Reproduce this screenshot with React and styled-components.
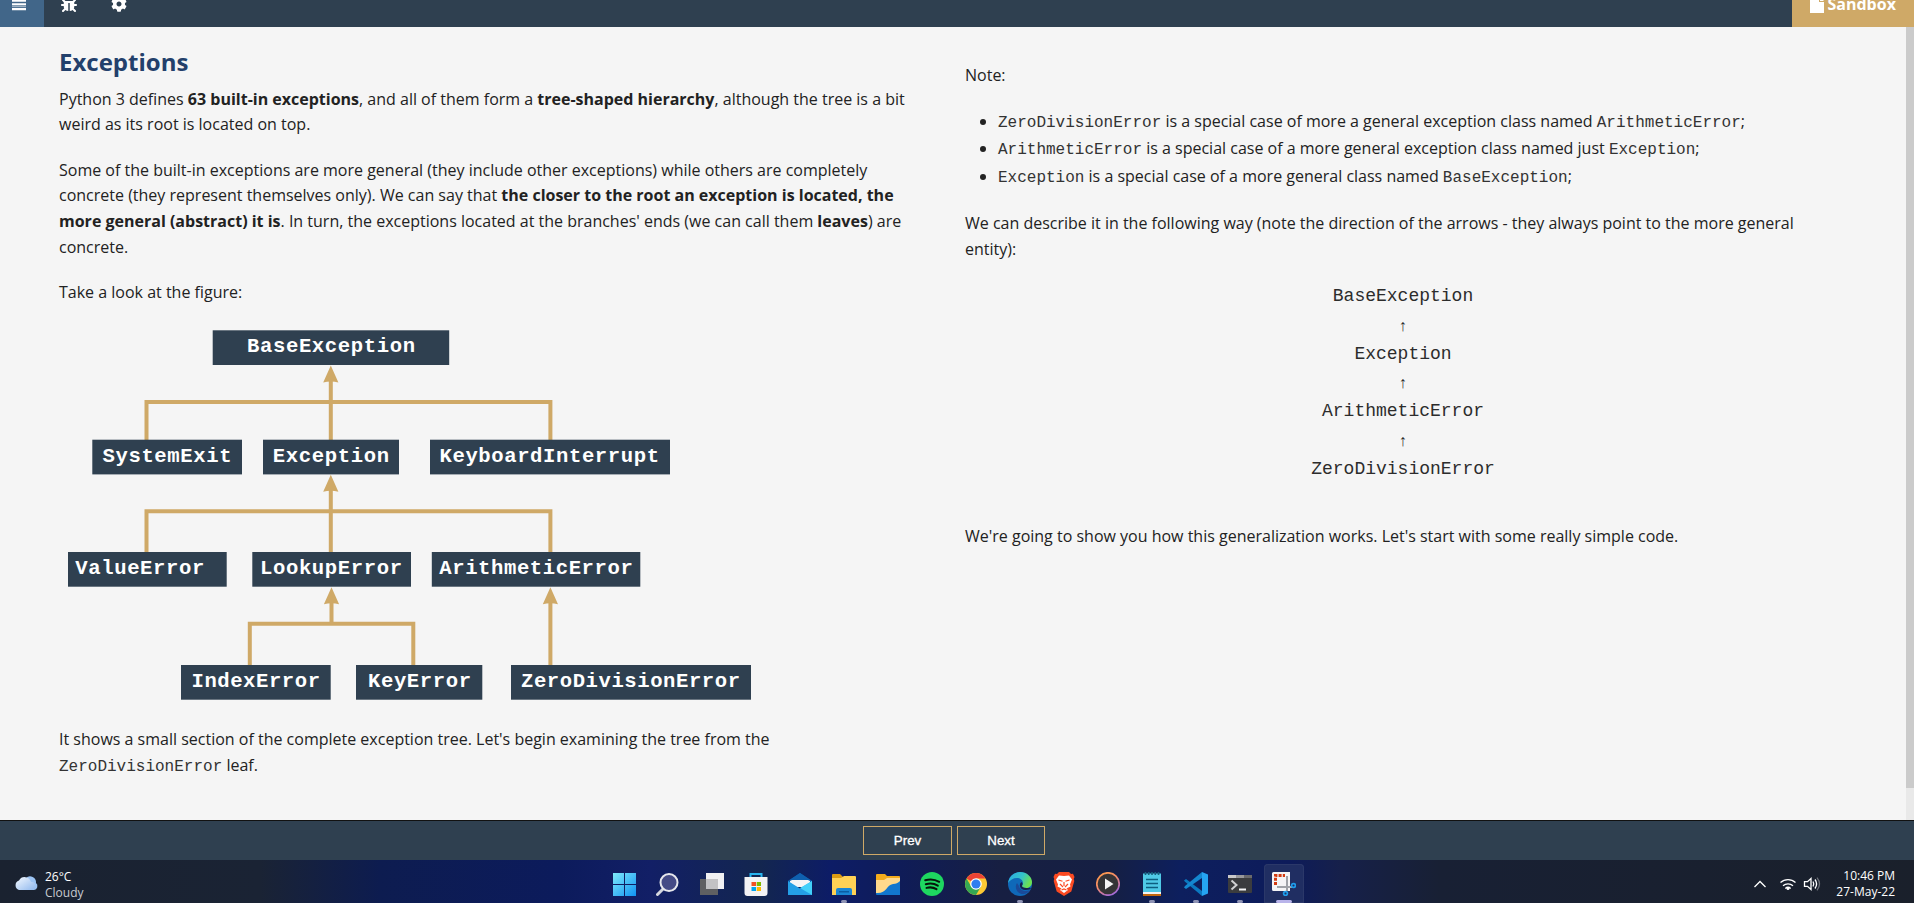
import React from "react";
import styled, { createGlobalStyle } from "styled-components";
import { FaBug, FaCog } from "react-icons/fa";

const GlobalStyle = createGlobalStyle`
  * { box-sizing: border-box; }
  body { margin: 0; overflow: hidden; background: #f5f5f5; }
`;

const Page = styled.div`
  display: flex;
  flex-direction: column;
  width: 100vw;
  height: 903px;
  font: 16px/25.6px "Open Sans", sans-serif;
  color: #222;
`;

const TopBar = styled.header`
  display: flex;
  justify-content: space-between;
  height: 27px;
  flex: none;
  overflow: hidden;
  background: #2f4050;
  color: #fff;
`;

const Tools = styled.nav`
  display: flex;
`;

const ToolButton = styled.div`
  display: flex;
  justify-content: center;
  width: ${(p) => p.$width}px;
  margin-top: -4px;
  background: ${(p) => (p.$active ? "#416689" : "transparent")};
  svg { display: block; }
`;

const SandboxTab = styled.div`
  display: flex;
  gap: 4px;
  width: 122px;
  padding-left: 17.5px;
  background: #cfa967;
  font-weight: 700;
  svg { margin-top: -4px; }
`;

const SandboxLabel = styled.span`
  margin-top: -8px;
`;

const Body = styled.div`
  display: flex;
  flex: 1;
  min-height: 0;
`;

const Columns = styled.main`
  display: grid;
  grid-template-columns: 876px 876px;
  column-gap: 30px;
  align-content: start;
  flex: 1;
  padding-left: 59px;
`;

const Column = styled.section`
  padding-top: ${(p) => p.$top}px;
`;

const Title = styled.h1`
  margin: 0 0 7.6px;
  font-size: 24px;
  line-height: 34px;
  font-weight: 700;
  color: #23406b;
`;

const Paragraph = styled.p`
  margin: 0 0 20px;
`;

const Code = styled.code`
  font: 16px/1 "Liberation Mono", monospace;
  color: #333;
`;

const Figure = styled.svg`
  display: block;
  margin: -26.2px 0 17.4px;
`;

const Notes = styled.ul`
  margin: -1px 0 21px;
  padding-left: 33px;
  line-height: 27.5px;
`;

const Chain = styled.div`
  margin: 3px 0 40.6px;
  font: 18px/28.7px "Liberation Mono", monospace;
  text-align: center;
  color: #2c2c2c;
`;

const ChainArrow = styled.div`
  padding-top: 4px;
  font-size: 16px;
  line-height: 24.7px;
`;

const ScrollTrack = styled.div`
  width: 8px;
  background: #e9e9e9;
`;

const ScrollThumb = styled.div`
  height: 761px;
  background: #cbcbcb;
`;

const Pager = styled.footer`
  display: flex;
  justify-content: center;
  align-items: flex-start;
  gap: 5px;
  height: 40px;
  flex: none;
  padding: 5px 6px 0 0;
  border-top: 1px solid #111;
  background: #2f4050;
`;

const PagerButton = styled.button`
  width: ${(p) => p.$width}px;
  height: 29px;
  padding: 0;
  border: 1px solid #cfa967;
  background: transparent;
  color: #fff;
  font: 13.33px "Liberation Sans", Arial, sans-serif;
  -webkit-text-stroke: 0.3px #fff;
`;

const Taskbar = styled.div`
  display: grid;
  grid-template-columns: 602px 704px 1fr;
  height: 43px;
  flex: none;
  color: #fff;
  background: linear-gradient(90deg, #1a2230 0, #1a2334 260px, #0d1c50 380px, #0c1b5c 560px, #121f66 650px, #13264f 760px, #0d1c66 830px, #0f1c58 900px, #171f42 1000px, #151f43 1110px, #0d1f5e 1180px, #0d1b5a 1290px, #16204a 1340px, #182034 1440px, #1a202b 1914px);
`;

const Weather = styled.div`
  display: flex;
  gap: 7px;
  padding: 9px 0 0 14px;
  font: 12px/16px "Open Sans", sans-serif;
`;

const WeatherText = styled.div`
  span { display: block; }
  span + span { color: #c9ccd2; }
`;

const Apps = styled.div`
  display: flex;
`;

const AppSlot = styled.div`
  display: flex;
  flex-direction: column;
  align-items: center;
  width: 40px;
  margin: 4px 2px 0;
  padding-top: 8px;
  border-radius: 4px 4px 0 0;
  box-shadow: ${(p) => (p.$active ? "inset 0 0 0 1px #2b3869" : "none")};
  background: ${(p) => (p.$active ? "#202e62" : "transparent")};
`;

const Indicator = styled.i`
  width: ${(p) => (p.$active ? 16 : 6)}px;
  height: 3px;
  margin-top: 4px;
  border-radius: 2px;
  background: ${(p) => (p.$active ? "#b9b4ea" : "#8e93b5")};
`;

const Tray = styled.div`
  display: flex;
  justify-content: flex-end;
  padding-right: 19px;
  svg { margin-top: 12px; }
`;

const Clock = styled.div`
  margin-left: 1px;
  padding-top: 8px;
  width: 64px;
  text-align: right;
  white-space: nowrap;
  font: 12px/16px "Open Sans", sans-serif;
`;

const boxes = [
  ["BaseException", 212.7, 330.3, 236.5, 247, 352, 168],
  ["SystemExit", 92.3, 439.7, 149.7, 102.5, 461.7, 129],
  ["Exception", 263, 439.7, 136, 272.8, 461.7, 116.3],
  ["KeyboardInterrupt", 430, 439.7, 240, 439.5, 461.7, 219.5],
  ["ValueError", 68, 552, 158.7, 75.3, 574, 129],
  ["LookupError", 252.3, 552, 158.7, 260, 574, 142],
  ["ArithmeticError", 431.8, 552, 208.5, 439.3, 574, 193.5],
  ["IndexError", 181, 665, 149.7, 191.5, 687.3, 128.5],
  ["KeyError", 356, 665, 126.3, 368, 687.3, 103],
  ["ZeroDivisionError", 511, 665, 240, 521, 687.3, 219],
];

const arrows = [[330.8, 365.5], [330.8, 474.7], [331.5, 587.2], [550.4, 587.2]];

function ExceptionTree() {
  return (
    <Figure width="700" height="410" viewBox="59 300 700 410">
      <g fill="none" stroke="#cfa967" strokeWidth="4">
        <path d="M146.5 440V402H550.4V440M330.8 375V440" />
        <path d="M146.5 553V511.2H550.4V553M330.8 485V553" />
        <path d="M249.8 666V623.7H413.3V666M331.5 598V624M550.4 598V666" />
      </g>
      {arrows.map(([x, y]) => (
        <path key={`${x}-${y}`} fill="#cfa967" d={`M${x} ${y}l7.6 17q-7.6-2-15.2 0z`} />
      ))}
      {boxes.map(([name, x, y, w, tx, ty, tw]) => (
        <g key={name}>
          <rect x={x} y={y} width={w} height="34.7" fill="#2f4050" />
          <text x={tx} y={ty} textLength={tw} fill="#fff" fontFamily="'Liberation Mono', monospace" fontWeight="700" fontSize="20.6">
            {name}
          </text>
        </g>
      ))}
    </Figure>
  );
}

const Icon = ({ children }) => (
  <svg width="24" height="24" viewBox="0 0 24 24">{children}</svg>
);

const StartIcon = () => (
  <Icon>
    <linearGradient id="st" x1="0" y1="0" x2="1" y2="1"><stop stopColor="#7fe9fb" /><stop offset="1" stopColor="#1093f2" /></linearGradient>
    <path fill="url(#st)" d="M1 1h11v11H1zM13 1h11v11H13zM1 13h11v11H1zM13 13h11v11H13z" />
  </Icon>
);
const SearchIcon = () => (
  <Icon>
    <path d="M7.500 16.500L1.500 22.500" stroke="#d5d7df" strokeWidth="3" strokeLinecap="round" />
    <circle cx="13" cy="10.500" r="8.500" fill="#454b86" stroke="#e6e7ec" strokeWidth="2" />
  </Icon>
);
const TaskViewIcon = () => (
  <Icon>
    <path fill="#5f6062" d="M0 7h18v16H0z" />
    <path fill="#f0f0f2" d="M6 1h18v16H6z" />
    <path fill="#c2c2c4" d="M6 7h12v10H6z" />
  </Icon>
);
const StoreIcon = () => (
  <Icon>
    <path d="M6.500 6V2h11v4" fill="none" stroke="#28b4ee" strokeWidth="2" />
    <path fill="#f3f3f4" d="M.5 5h23v16a3 3 0 0 1-3 3h-17a3 3 0 0 1-3-3z" />
    <path fill="#f25022" d="M7.500 10H12v4H7.500z" /><path fill="#7fba00" d="M12.700 10H17v4h-4.300z" />
    <path fill="#00a4ef" d="M7.500 15H12v4H7.500z" /><path fill="#ffb900" d="M12.700 15H17v4h-4.300z" />
  </Icon>
);
const MailIcon = () => (
  <Icon>
    <path fill="#0f5fae" d="M0 9L12 1l12 8v4H0z" />
    <path fill="#f4f4f6" d="M2 8h20v7H2z" />
    <path fill="#0f5fae" d="M0 9L12 1l12 8H22L20 8H4L2 9z" />
    <path fill="#249fe6" d="M0 9l12 7.500L24 9v14H0z" />
    <path fill="#42d0fa" d="M24 9v14L12 16z" />
  </Icon>
);
const ExplorerIcon = () => (
  <Icon>
    <path fill="#dc9b12" d="M0 3a1 1 0 0 1 1-1h7l3 3v5H0z" />
    <path fill="#ffd155" d="M0 6h9l3-2h11a1 1 0 0 1 1 1v18H0z" />
    <path fill="#1a86d4" d="M4 23v-5a2 2 0 0 1 2-2h12a2 2 0 0 1 2 2v5z" />
    <path fill="#0a5ca3" d="M7 19h10v1.500H7z" />
  </Icon>
);
const FolderIcon = () => (
  <Icon>
    <path fill="#f4ac1c" d="M0 3a1 1 0 0 1 1-1h8l2 2h12a1 1 0 0 1 1 1v8H0z" />
    <path fill="#ffd98c" d="M0 8h8l3-2h13v16H0z" />
    <path fill="#1277ce" d="M0 21c11 1 10-8 17-9 3 0 5-1 7-3v14H1a1 1 0 0 1-1-1z" />
  </Icon>
);
const SpotifyIcon = () => (
  <Icon>
    <circle cx="12" cy="12" r="12" fill="#1ed760" />
    <path d="M5.200 8.300q7.500-2.300 14 1.500M5.800 12.200q6.500-2 12 1.400M6.500 15.900q5.500-1.500 10 1.300" fill="none" stroke="#06150b" strokeWidth="2" strokeLinecap="round" />
  </Icon>
);
const ChromeIcon = () => (
  <Icon>
    <circle cx="12" cy="12" r="11" fill="#fcc934" />
    <path fill="#ea4335" d="M12 12L2.500 6.500A11 11 0 0 1 21.500 6.500H12z" />
    <path fill="#34a853" d="M2.500 6.500A11 11 0 0 0 12 23l5-8.500H7.200z" />
    <circle cx="12" cy="12" r="5.800" fill="#fff" /><circle cx="12" cy="12" r="4.600" fill="#2f7df0" />
  </Icon>
);
const EdgeIcon = () => (
  <Icon>
    <linearGradient id="eg" x1="0" y1="0" x2="1" y2=".4"><stop stopColor="#2aa9e5" /><stop offset=".6" stopColor="#35c4c9" /><stop offset="1" stopColor="#6be052" /></linearGradient>
    <circle cx="12" cy="12" r="12" fill="#0f69b9" />
    <path fill="url(#eg)" d="M0 11C1 4 6 0 12 0c7 0 12 5 12 10 0 4-3 6-6 6-3 0-4-1-4-2s1-1 1-3c0-3-3-5-6-5C5 6 2 8 0 11z" />
    <path fill="#1b4a98" d="M9 11c-3 4 0 11 6 11 3 0 6-2 7-4-4 2-10 1-11-4z" />
    <path fill="#16224d" d="M13.500 10c-3 2-2 8 4 8 3 0 5-1 5-1 1-2-2-1-4-1-3 0-5-1-4.500-2.500.8-1 1-2-.5-3.500z" />
  </Icon>
);
const BraveIcon = () => (
  <Icon>
    <path fill="#fb4a22" d="M7 0h10l2 2 2-.3L22.500 5l-.8 2 .6 2-3 10.500L12 24l-7.300-4.500L1.700 9l.6-2-.8-2L3 1.700 5 2z" />
    <path fill="#fff" d="M12 4l5-.5 3 4-2 5 .5 2-4 2 1.500 1.500-4 3-4-3 1.500-1.500-4-2 .5-2-2-5 3-4z" />
    <path d="M6.500 8l4 1.200M17.500 8l-4 1.200M12 10v4M8 12l3 3M16 12l-3 3M9.500 18l2.500-1 2.500 1" stroke="#fb4a22" strokeWidth="1.200" fill="none" />
  </Icon>
);
const PlayerIcon = () => (
  <Icon>
    <linearGradient id="pl" x1="0" y1="0" x2=".6" y2="1"><stop stopColor="#ff9d45" /><stop offset=".5" stopColor="#f28a6a" /><stop offset="1" stopColor="#a46ad2" /></linearGradient>
    <circle cx="12" cy="12" r="11.200" fill="#343436" stroke="url(#pl)" strokeWidth="1.700" />
    <path fill="#f5f5f5" d="M9 6.500l8.500 5.500L9 17.500z" />
  </Icon>
);
const NotepadIcon = () => (
  <Icon>
    <path fill="#4fc9e6" d="M3 1.500h18V21H3z" />
    <path fill="#f3f3f3" d="M3 20h18v2H3z" /><path fill="#c4680e" d="M3 22h18v2H3z" />
    <path stroke="#0d5f80" strokeWidth="1.600" d="M6 7.500h12M6 11.500h12M6 15.500h12" />
    <path stroke="#16607c" strokeWidth="1.600" d="M5.500 0v3M8.700 0v3M12 0v3M15.300 0v3M18.500 0v3" />
  </Icon>
);
const CodeIcon = () => (
  <Icon>
    <path fill="#0b78c0" d="M0 8.500L2 7l16 12v5L1 9.800z" />
    <path fill="#1487d0" d="M0 15.500L2 17 18 6V0L1 14z" />
    <path fill="#25a4f2" d="M18 0l6 2.500v19L18 24z" />
  </Icon>
);
const TerminalIcon = () => (
  <Icon>
    <path fill="#3b3c3e" d="M0 3h24v17a1 1 0 0 1-1 1H1a1 1 0 0 1-1-1z" />
    <path fill="#c9c9cb" d="M0 3h8v3H0z" /><path fill="#98989b" d="M8 3h8v3H8z" /><path fill="#69696c" d="M16 3h8v3h-8z" />
    <path d="M3.500 8.500l5 4.500-5 4.500" fill="none" stroke="#d0d0d2" strokeWidth="2" />
    <path stroke="#f5f5f5" strokeWidth="2" d="M11 17.500h7" />
  </Icon>
);
const SnipIcon = () => (
  <Icon>
    <path fill="#f4f4f6" d="M0 1.500A1.500 1.500 0 0 1 1.500 0H18v19H1.500A1.500 1.500 0 0 1 0 17.500z" />
    <path d="M3.500 13V3.500H13" fill="none" stroke="#d23b12" strokeWidth="3" strokeDasharray="3 1.200" />
    <path d="M15 4v15M5 15h15" stroke="#9fa2a8" strokeWidth="2" />
    <circle cx="13.500" cy="21.500" r="1.900" fill="none" stroke="#1f9cea" strokeWidth="1.700" />
    <circle cx="21.500" cy="13.500" r="1.900" fill="none" stroke="#1f9cea" strokeWidth="1.700" />
  </Icon>
);

const apps = [
  [StartIcon], [SearchIcon], [TaskViewIcon], [StoreIcon], [MailIcon],
  [ExplorerIcon, true], [FolderIcon], [SpotifyIcon], [ChromeIcon],
  [EdgeIcon, true], [BraveIcon], [PlayerIcon], [NotepadIcon, true],
  [CodeIcon, true], [TerminalIcon, true], [SnipIcon, true, true],
];

export default function App() {
  return (
    <Page>
      <GlobalStyle />
      <TopBar>
        <Tools>
          <ToolButton $active $width={44}>
            <svg width="44" height="31" viewBox="3 -4 44 31">
              <path fill="#fff" d="M15 0h14v1.700H15zM15 3.300h14v1.900H15zM15 8h14v2.300H15z" />
              <path fill="#9fb2c4" d="M15 5.600h14v1.600H15z" />
            </svg>
          </ToolButton>
          <ToolButton $width={50}><FaBug size={16} /></ToolButton>
          <ToolButton $width={50}><FaCog size={16} /></ToolButton>
        </Tools>
        <SandboxTab>
          <svg width="14" height="17" viewBox="0 0 14 17">
            <path fill="#fff" d="M0 0h9v6h5v11H0z" /><path fill="#fff" d="M10 1l4 4h-4z" />
          </svg>
          <SandboxLabel>Sandbox</SandboxLabel>
        </SandboxTab>
      </TopBar>
      <Body>
        <Columns>
          <Column $top={18}>
            <Title>Exceptions</Title>
            <Paragraph>
              Python 3 defines <b>63 built-in exceptions</b>, and all of them form a <b>tree-shaped hierarchy</b>, although the tree is a bit weird as its root is located on top.
            </Paragraph>
            <Paragraph>
              Some of the built-in exceptions are more general (they include other exceptions) while others are completely concrete (they represent themselves only). We can say that <b>the closer to the root an exception is located, the more general (abstract) it is</b>. In turn, the exceptions located at the branches' ends (we can call them <b>leaves</b>) are concrete.
            </Paragraph>
            <Paragraph>Take a look at the figure:</Paragraph>
            <ExceptionTree />
            <Paragraph>
              It shows a small section of the complete exception tree. Let's begin examining the tree from the <Code>ZeroDivisionError</Code> leaf.
            </Paragraph>
          </Column>
          <Column $top={36}>
            <Paragraph>Note:</Paragraph>
            <Notes>
              <li><Code>ZeroDivisionError</Code> is a special case of more a general exception class named <Code>ArithmeticError</Code>;</li>
              <li><Code>ArithmeticError</Code> is a special case of a more general exception class named just <Code>Exception</Code>;</li>
              <li><Code>Exception</Code> is a special case of a more general class named <Code>BaseException</Code>;</li>
            </Notes>
            <Paragraph>
              We can describe it in the following way (note the direction of the arrows - they always point to the more general entity):
            </Paragraph>
            <Chain>
              <div>BaseException</div>
              <ChainArrow>↑</ChainArrow>
              <div>Exception</div>
              <ChainArrow>↑</ChainArrow>
              <div>ArithmeticError</div>
              <ChainArrow>↑</ChainArrow>
              <div>ZeroDivisionError</div>
            </Chain>
            <Paragraph>We're going to show you how this generalization works. Let's start with some really simple code.</Paragraph>
          </Column>
        </Columns>
        <ScrollTrack><ScrollThumb /></ScrollTrack>
      </Body>
      <Pager>
        <PagerButton $width={89}>Prev</PagerButton>
        <PagerButton $width={88}>Next</PagerButton>
      </Pager>
      <Taskbar>
        <Weather>
          <svg width="24" height="26" viewBox="0 0 24 26">
            <linearGradient id="cl" x1="0" y1="0" x2="1" y2="1"><stop stopColor="#f4f9ff" /><stop offset="1" stopColor="#8fb8ee" /></linearGradient>
            <path fill="#9cc4f4" d="M12 9a6 6 0 0 1 10 5 4 4 0 0 1-2 7h-5z" />
            <path fill="url(#cl)" d="M5 21a5 5 0 0 1 0-9.500A6.500 6.500 0 0 1 17 13a4 4 0 0 1 1 8z" />
          </svg>
          <WeatherText><span>26°C</span><span>Cloudy</span></WeatherText>
        </Weather>
        <Apps>
          {apps.map(([Glyph, running, active], i) => (
            <AppSlot key={i} $active={active}>
              <Glyph />
              {running && <Indicator $active={active} />}
            </AppSlot>
          ))}
        </Apps>
        <Tray>
          <svg width="80" height="24" viewBox="1750 872 80 24" fill="none" stroke="#fff" strokeWidth="1.300">
            <path d="M1754.500 887l5.500-5.500 5.500 5.500" />
            <path d="M1780.500 882.500a11 11 0 0 1 15 0M1783 885.700a7.500 7.500 0 0 1 10 0M1785.300 888.500a4 4 0 0 1 5.400 0" />
            <circle cx="1788" cy="888.500" r="1.500" fill="#fff" stroke="none" />
            <path d="M1804.500 881.700h3l3.500-3.200v11l-3.500-3.200h-3zM1813 881.500q1.500 2.500 0 5M1815 879.500q3.200 4.500 0 9" />
            <path stroke="#6c7078" d="M1817 877.700q5 6.300 0 12.600" />
          </svg>
          <Clock>10:46 PM<br />27-May-22</Clock>
        </Tray>
      </Taskbar>
    </Page>
  );
}
